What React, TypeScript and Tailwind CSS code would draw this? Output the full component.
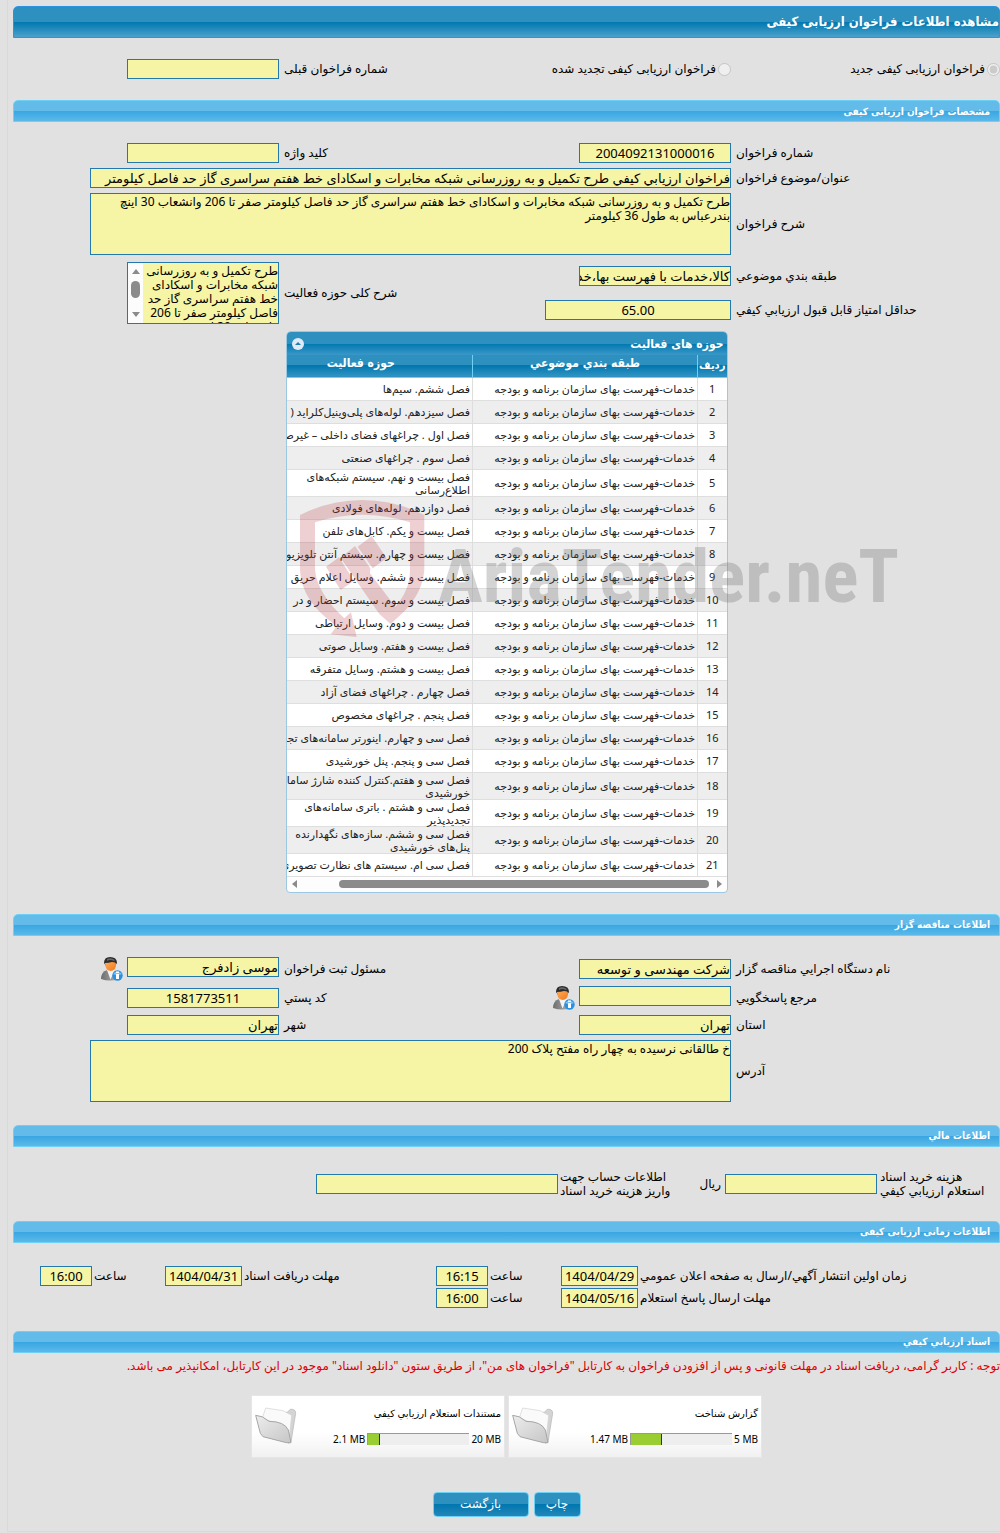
import type { ReactNode } from "react";

const fieldStyle =
  "block border border-[#2378ae] bg-[#f6f4a5] p-0 text-black outline-none";

const boldFont = "font-bold [font-family:'DejaVu_Sans_Condensed','DejaVu_Sans',sans-serif]";

type Activity = { lines: string[] };

const activities: Activity[] = [
  { lines: ["فصل ششم. سیم‌ها"] },
  { lines: ["فصل سیزدهم. لوله‌های پلی‌وینیل‌کلراید ("] },
  { lines: ["فصل اول . چراغهای فضای داخلی – غیرصنعتی"] },
  { lines: ["فصل سوم . چراغهای صنعتی"] },
  { lines: ["فصل بیست و نهم. سیستم شبکه‌های", "اطلاع‌رسانی"] },
  { lines: ["فصل دوازدهم. لوله‌های فولادی"] },
  { lines: ["فصل بیست و یکم. کابل‌های تلفن"] },
  { lines: ["فصل بیست و چهارم. سیستم آنتن تلویزیون"] },
  { lines: ["فصل بیست و ششم. وسایل اعلام حریق"] },
  { lines: ["فصل بیست و سوم. سیستم احضار و در"] },
  { lines: ["فصل بیست و دوم. وسایل ارتباطی"] },
  { lines: ["فصل بیست و هفتم. وسایل صوتی"] },
  { lines: ["فصل بیست و هشتم. وسایل متفرقه"] },
  { lines: ["فصل چهارم . چراغهای فضای آزاد"] },
  { lines: ["فصل پنجم . چراغهای مخصوص"] },
  { lines: ["فصل سی و چهارم. اینورتر سامانه‌های تجدیدپذیر"] },
  { lines: ["فصل سی و پنجم. پنل خورشیدی"] },
  { lines: ["فصل سی و هفتم.کنترل کننده شارژ سامانه‌های", "خورشیدی"] },
  { lines: ["فصل سی و هشتم . باتری سامانه‌های", "تجدیدپذیر"] },
  { lines: ["فصل سی و ششم. سازه‌های نگهدارنده", "پنل‌های خورشیدی"] },
  { lines: ["فصل سی ام. سیستم های نظارت تصویری"] },
];

function SectionBar({ children }: { children: ReactNode }) {
  return (
    <h2 className={`flex h-[22px] items-center rounded-t-[5px] border border-[#6fd0f6] bg-[linear-gradient(#63bbea_50%,#38a6e1_50%,#5cb9ea)] px-[9px] text-[10px] text-white ${boldFont}`}>
      {children}
    </h2>
  );
}

function Label({ id, className, children }: { id: string; className: string; children: ReactNode }) {
  return (
    <label htmlFor={id} className={`shrink-0 text-left leading-[14px] ${className}`}>
      {children}
    </label>
  );
}

function Field({ id, value = "", className }: { id: string; value?: string; className: string }) {
  return (
    <input id={id} readOnly defaultValue={value} className={`${fieldStyle} h-5 shrink-0 text-[13px] ${className}`} />
  );
}

function PersonInfo({ label }: { label: string }) {
  return (
    <button type="button" aria-label={label} className="h-6 w-[22px] shrink-0">
      <svg viewBox="0 0 22 24" className="h-6 w-[22px]">
        <defs>
          <linearGradient id="suit" x1="0" x2="1">
            <stop offset="0" stopColor="#6d6d6d" />
            <stop offset="1" stopColor="#b9b9b9" />
          </linearGradient>
          <linearGradient id="face" x1="0" x2="1" y2="1">
            <stop offset="0" stopColor="#ffab5a" />
            <stop offset="1" stopColor="#f07818" />
          </linearGradient>
        </defs>
        <path d="M0 22 Q0 15 6 13 L13 13 Q18 15 18 22 Q9 25 0 22Z" fill="url(#suit)" />
        <path d="M6 13 L9.500 22.500 L14 13Z" fill="#f4f4f4" />
        <path d="M3 6 Q3 0 9 0 Q16 0 16 6 L14 9 H5Z" fill="#2b2b2b" />
        <path d="M6 2 Q10 0 14 3 L13 4 Q9 2 6 4Z" fill="#686868" />
        <path d="M4 6 Q8 6 11 5 Q15 5 15 7 Q15 14 9.500 14 Q4 13 4 6Z" fill="url(#face)" />
        <circle cx="16.500" cy="18.500" r="5.200" fill="#2a92e4" />
        <path d="M12 17 Q16 12 21 17 Q17 19 12 17Z" fill="#7cc3f5" />
        <path d="M15 14.500 H18 V16 H15Z M15 17 H18 V22 H15Z" fill="#fff" />
      </svg>
    </button>
  );
}

function Folder() {
  return (
    <svg viewBox="0 0 126 120" className="h-10 w-[42px] shrink-0" aria-hidden="true">
      <defs>
        <linearGradient id="folder-front" x1="0" y1="0" x2="1" y2="1">
          <stop offset="0" stopColor="#ededed" />
          <stop offset="1" stopColor="#c6c6c6" />
        </linearGradient>
      </defs>
      <path d="M84 22 Q100 20 106 10 Q122 8 122 22 L108 108 L100 112 L80 50Z" fill="#d4d4d4" stroke="#b4b4b4" strokeWidth="2" />
      <path d="M22 36 L32 6 L84 14 L110 28 L104 84 L84 60Z" fill="#fafafa" stroke="#d2d2d2" strokeWidth="2" />
      <path d="M2 28 Q22 28 42 46 Q88 46 100 72 L108 110 L94 110 L24 92 L16 82Z" fill="url(#folder-front)" stroke="#a6a6a6" strokeWidth="3" />
    </svg>
  );
}

function Watermark() {
  return (
    <svg
      viewBox="0 0 620 160"
      direction="ltr"
      className="pointer-events-none absolute top-[159px] left-1 h-[160px] w-[620px] max-w-none"
      aria-hidden="true"
    >
      <g transform="scale(0.3333)" fill="#b8323c" fillOpacity="0.23">
        <path
          fillRule="evenodd"
          d="M30 75 Q120 30 217 30 Q315 30 403 75 V240 Q398 305 345 362 L302 402 L268 372 L152 204 L195 168 L241 235 L240 250 L316 350 Q360 300 360 240 V97 Q290 74 217 74 Q145 74 75 97 V240 Q82 310 163 385 L183 367 L200 441 L122 433 L140 408 Q34 335 30 240Z"
        />
        <path d="M108 230 L147 202 L192 272 L152 300Z M203 170 L245 138 L290 205 L248 235Z" />
      </g>
      <text
        x="148"
        y="112"
        fill="#646464"
        fillOpacity="0.28"
        className="[font-family:'Roboto_Condensed','Roboto',sans-serif] text-[75px] font-bold"
      >
        AriaTender.neT
      </text>
    </svg>
  );
}

function ActivityTable() {
  return (
    <div className="relative mx-auto mt-[7px] w-[442px]">
      <div className="overflow-hidden rounded-t-[5px] rounded-b-sm border border-[#9cc8e2] bg-[#fdfdfd]">
        <div className={`flex h-[23px] items-center justify-between bg-[linear-gradient(#2d90bf_50%,#0077af_50%,#3a98c8)] pr-[3px] pl-1 text-[12px] text-white ${boldFont}`}>
          <h3>حوزه های فعالیت</h3>
          <button type="button" aria-label="بستن جدول">
            <svg viewBox="0 0 14 14" className="size-[14px]">
              <circle cx="7" cy="7" r="6" fill="#dfeaf6" />
              <path d="M4 8 L7 5 L10 8Z" fill="#1c7db1" />
            </svg>
          </button>
        </div>
        <div className="overflow-hidden">
          <table className="w-[477px] table-fixed border-collapse text-[11px] leading-[13px] text-[#222]">
            <colgroup>
              <col className="w-[29px]" />
              <col className="w-[225px]" />
              <col className="w-[223px]" />
            </colgroup>
            <thead>
              <tr className={`h-[22px] border-b border-[#6fd0f6] bg-[linear-gradient(#2d90bf_50%,#0077af_50%,#2f92c2)] text-[12px] text-white ${boldFont}`}>
                <th className="border-l border-[#6fd0f6] p-0 text-[11px] whitespace-nowrap">ردیف</th>
                <th className="border-l border-[#6fd0f6] px-0 pt-0 pb-1">طبقه بندي موضوعي</th>
                <th className="px-0 pt-0 pb-1">حوزه فعالیت</th>
              </tr>
            </thead>
            <tbody>
              {activities.map((activity, i) => (
                <tr key={i} className="h-[23px] border-b border-[#dedede] odd:bg-white even:bg-[#eeeeee]">
                  <td className="border-l border-[#dedede] p-0 text-center">{i + 1}</td>
                  <td className="border-l border-[#dedede] py-0 pr-0.5 pl-0 whitespace-nowrap">
                    خدمات-فهرست بهای سازمان برنامه و بودجه
                  </td>
                  <td className="py-0 pr-0.5 pl-0 whitespace-nowrap">
                    {activity.lines.map((line) => (
                      <span key={line} className="block">{line}</span>
                    ))}
                  </td>
                </tr>
              ))}
            </tbody>
          </table>
        </div>
        <div className="flex h-[15px] items-center gap-2 px-[5px]">
          <span className="border-y-4 border-l-5 border-y-transparent border-l-[#8b8b8b]" />
          <span className="h-2 w-[370px] rounded-full bg-[#8b8b8b]" />
          <span className="mr-auto border-y-4 border-r-5 border-y-transparent border-r-[#8b8b8b]" />
        </div>
      </div>
      <Watermark />
    </div>
  );
}

function DocumentCard({ title, used, limit, percent }: { title: string; used: string; limit: string; percent: number }) {
  return (
    <article className="flex h-[63px] w-[254px] items-center justify-between border border-[#e6e6e6] bg-[linear-gradient(#fff_60%,#f1f1f1)] px-[3px]">
      <div className="flex flex-col gap-3 text-[10px] leading-[14px]">
        <h3>{title}</h3>
        <div className="flex items-center gap-0.5">
          <span dir="ltr">{limit}</span>
          <div dir="ltr" className="h-3 w-[102px] border-t border-l border-[#999] bg-[#eeeeee]">
            <div className="h-full border-r border-[#333] bg-[#9acd32]" style={{ width: `${percent}%` }} />
          </div>
          <span dir="ltr">{used}</span>
        </div>
      </div>
      <Folder />
    </article>
  );
}

const buttonStyle =
  "h-[25px] rounded-[4px] border border-[#6fd0f6] bg-[linear-gradient(#2d90bf_50%,#0077af_50%,#2386b8)] text-[12px] text-white";

export default function App() {
  return (
    <div
      dir="rtl"
      className="min-h-screen overflow-hidden bg-[#e1e1e1] pl-[7px] text-[12px] text-black [font-family:'Noto_Sans','DejaVu_Sans',sans-serif]"
    >
      <main className="border-b border-l border-[#d9d9d9] pt-[6px] pb-[14px] pl-[5px]">
        <h1 className={`flex h-8 items-center rounded-t-[5px] border border-[#2d93df] bg-[linear-gradient(#2d90bf_50%,#0077af_50%,#4ba1cc)] text-[13px] text-white ${boldFont}`}>
          مشاهده اطلاعات فراخوان ارزیابی کیفی
        </h1>

        <div className="mt-[21px] flex items-center">
          <label className="flex w-[269px] shrink-0 items-center gap-0.5">
            <input type="radio" name="kind" disabled defaultChecked className="size-[13px]" />
            فراخوان ارزیابی کیفی جدید
          </label>
          <label className="flex shrink-0 items-center gap-0.5">
            <input type="radio" name="kind" disabled className="size-[13px]" />
            فراخوان ارزیابی کیفی تجدید شده
          </label>
          <Label id="previous" className="mr-auto pl-[5px]">شماره فراخوان قبلی</Label>
          <Field id="previous" className="ml-[114px] w-[152px]" />
        </div>

        <section className="mt-[21px]">
          <SectionBar>مشخصات فراخوان ارزیابی کیفی</SectionBar>
          <div className="mt-[21px] flex flex-col gap-[5px]">
            <div className="flex items-center">
              <Label id="number" className="w-[269px] pl-[5px]">شماره فراخوان</Label>
              <Field id="number" value="2004092131000016" className="w-[152px] text-center" />
              <Label id="keyword" className="mr-auto pl-[5px]">کلید واژه</Label>
              <Field id="keyword" className="ml-[114px] w-[152px]" />
            </div>
            <div className="flex items-center pl-[77px]">
              <Label id="title" className="w-[269px] pl-[5px]">عنوان/موضوع فراخوان</Label>
              <input
                id="title"
                readOnly
                defaultValue="فراخوان ارزیابي کیفي طرح تکمیل و به روزرسانی شبکه مخابرات و اسکادای خط هفتم سراسری گاز حد فاصل کیلومتر"
                className={`${fieldStyle} h-5 min-w-0 flex-1 text-[13px]`}
              />
            </div>
            <div className="flex items-center pl-[77px]">
              <Label id="description" className="w-[269px] pl-[5px]">شرح فراخوان</Label>
              <textarea
                id="description"
                readOnly
                className={`${fieldStyle} h-[62px] min-w-0 flex-1 resize-none overflow-hidden pt-px text-[12px] leading-[14px]`}
                defaultValue={
                  "طرح تکمیل و به روزرسانی شبکه مخابرات و اسکادای خط هفتم سراسری گاز حد فاصل کیلومتر صفر تا 206 وانشعاب 30 اینچ\nبندرعباس به طول 36 کیلومتر"
                }
              />
            </div>
          </div>
          <div className="mt-[7px] flex items-center">
            <div className="flex flex-col gap-[14px]">
              <div className="flex items-center">
                <Label id="category" className="w-[269px] pl-[5px]">طبقه بندي موضوعي</Label>
                <Field id="category" value="کالا،خدمات با فهرست بها،خدمات" className="w-[152px]" />
              </div>
              <div className="flex items-center">
                <Label id="score" className="w-[269px] pl-[5px]">حداقل امتیاز قابل قبول ارزیابي کیفي</Label>
                <Field id="score" value="65.00" className="w-[186px] text-center" />
              </div>
            </div>
            <Label id="scope" className="mr-auto pl-[5px]">شرح کلی حوزه فعالیت</Label>
            <div className="ml-[114px] flex h-[62px] w-[152px] shrink-0 border border-[#2378ae] bg-[#f6f4a5]">
              <textarea
                id="scope"
                readOnly
                className="min-w-0 flex-1 resize-none overflow-hidden bg-transparent pt-px text-[12px] leading-[14px] whitespace-pre outline-none"
                defaultValue={
                  "طرح تکمیل و به روزرسانی\nشبکه مخابرات و اسکادای\nخط هفتم سراسری گاز حد\nفاصل کیلومتر صفر تا 206\nوانشعاب 30 اینچ"
                }
              />
              <div className="flex w-[15px] flex-col items-center bg-[#fcfcfc] py-1.5">
                <span className="border-x-4 border-b-5 border-x-transparent border-b-[#8b8b8b]" />
                <span className="mt-[7px] h-[17px] w-[9px] rounded-full bg-[#8b8b8b]" />
                <span className="mt-auto border-x-4 border-t-5 border-x-transparent border-t-[#8b8b8b]" />
              </div>
            </div>
          </div>
          <ActivityTable />
        </section>

        <section className="mt-[21px]">
          <SectionBar>اطلاعات مناقصه گزار</SectionBar>
          <div className="mt-[21px] flex flex-col gap-[5px]">
            <div className="flex h-6 items-center">
              <Label id="agency" className="w-[269px] pl-[5px]">نام دستگاه اجرایي مناقصه گزار</Label>
              <Field id="agency" value="شرکت مهندسی و توسعه" className="w-[152px]" />
              <Label id="registrar" className="mr-auto pl-[5px]">مسئول ثبت فراخوان</Label>
              <div className="flex w-[266px] shrink-0 items-start gap-1">
                <Field id="registrar" value="موسی زادفرج" className="w-[152px]" />
                <PersonInfo label="اطلاعات مسئول ثبت" />
              </div>
            </div>
            <div className="flex h-6 items-center">
              <Label id="contact" className="w-[269px] pl-[5px]">مرجع پاسخگویي</Label>
              <div className="flex items-start gap-1">
                <Field id="contact" className="w-[152px]" />
                <PersonInfo label="اطلاعات مرجع پاسخگویي" />
              </div>
              <Label id="postcode" className="mr-auto pl-[5px]">کد پستي</Label>
              <Field id="postcode" value="1581773511" className="ml-[114px] w-[152px] text-center" />
            </div>
            <div className="flex items-center">
              <Label id="province" className="w-[269px] pl-[5px]">استان</Label>
              <Field id="province" value="تهران" className="w-[152px]" />
              <Label id="city" className="mr-auto pl-[5px]">شهر</Label>
              <Field id="city" value="تهران" className="ml-[114px] w-[152px]" />
            </div>
            <div className="flex items-center pl-[77px]">
              <Label id="address" className="w-[269px] pl-[5px]">آدرس</Label>
              <textarea
                id="address"
                readOnly
                className={`${fieldStyle} h-[62px] min-w-0 flex-1 resize-none overflow-hidden pt-px text-[12px] leading-[14px]`}
                defaultValue="خ طالقانی نرسیده به چهار راه مفتح پلاک 200"
              />
            </div>
          </div>
        </section>

        <section className="mt-[23px]">
          <SectionBar>اطلاعات مالي</SectionBar>
          <div className="mt-[23px] flex items-center">
            <Label id="cost" className="w-[123px] pl-[3px]">
              <span className="block">هزینه خرید اسناد</span>
              <span className="block">استعلام ارزیابي کیفي</span>
            </Label>
            <Field id="cost" className="w-[152px]" />
            <span className="w-12 pr-1">ریال</span>
            <Label id="account" className="w-[119px] pl-0.5">
              <span className="block">اطلاعات حساب جهت</span>
              <span className="block">واریز هزینه خرید اسناد</span>
            </Label>
            <Field id="account" className="w-[242px]" />
          </div>
        </section>

        <section className="mt-[23px]">
          <SectionBar>اطلاعات زمانی ارزیابی کیفی</SectionBar>
          <div className="mt-[23px] flex flex-col gap-0.5">
            <div className="flex items-center">
              <Label id="publish-date" className="w-[362px] pl-0.5">زمان اولین انتشار آگهي/ارسال به صفحه اعلان عمومي</Label>
              <Field id="publish-date" value="1404/04/29" className="w-[77px] text-center" />
              <Label id="publish-time" className="w-[73px] pl-0.5">ساعت</Label>
              <Field id="publish-time" value="16:15" className="w-[52px] text-center" />
              <Label id="receive-date" className="w-[194px] pl-0.5">مهلت دریافت اسناد</Label>
              <Field id="receive-date" value="1404/04/31" className="w-[77px] text-center" />
              <Label id="receive-time" className="w-[73px] pl-0.5">ساعت</Label>
              <Field id="receive-time" value="16:00" className="w-[52px] text-center" />
            </div>
            <div className="flex items-center">
              <Label id="reply-date" className="w-[362px] pl-0.5">مهلت ارسال پاسخ استعلام</Label>
              <Field id="reply-date" value="1404/05/16" className="w-[77px] text-center" />
              <Label id="reply-time" className="w-[73px] pl-0.5">ساعت</Label>
              <Field id="reply-time" value="16:00" className="w-[52px] text-center" />
            </div>
          </div>
        </section>

        <section className="mt-[23px]">
          <SectionBar>اسناد ارزیابي کیفي</SectionBar>
          <p className="mt-1 leading-[18px] text-[#dd0000]">
            توجه : کاربر گرامی، دریافت اسناد در مهلت قانونی و پس از افزودن فراخوان به کارتابل "فراخوان های من"، از طریق ستون "دانلود اسناد" موجود در این کارتابل، امکانپذیر می باشد.
          </p>
          <div className="mt-5 flex flex-wrap justify-center gap-[3px]">
            <DocumentCard title="گزارش شناخت" limit="5 MB" used="1.47 MB" percent={31} />
            <DocumentCard title="مستندات استعلام ارزیابي کیفي" limit="20 MB" used="2.1 MB" percent={12} />
          </div>
        </section>

        <div className="mt-[34px] flex justify-center gap-[5px]">
          <button type="button" className={`${buttonStyle} w-[47px]`}>چاپ</button>
          <button type="button" className={`${buttonStyle} w-[96px]`}>بازگشت</button>
        </div>
      </main>
    </div>
  );
}
